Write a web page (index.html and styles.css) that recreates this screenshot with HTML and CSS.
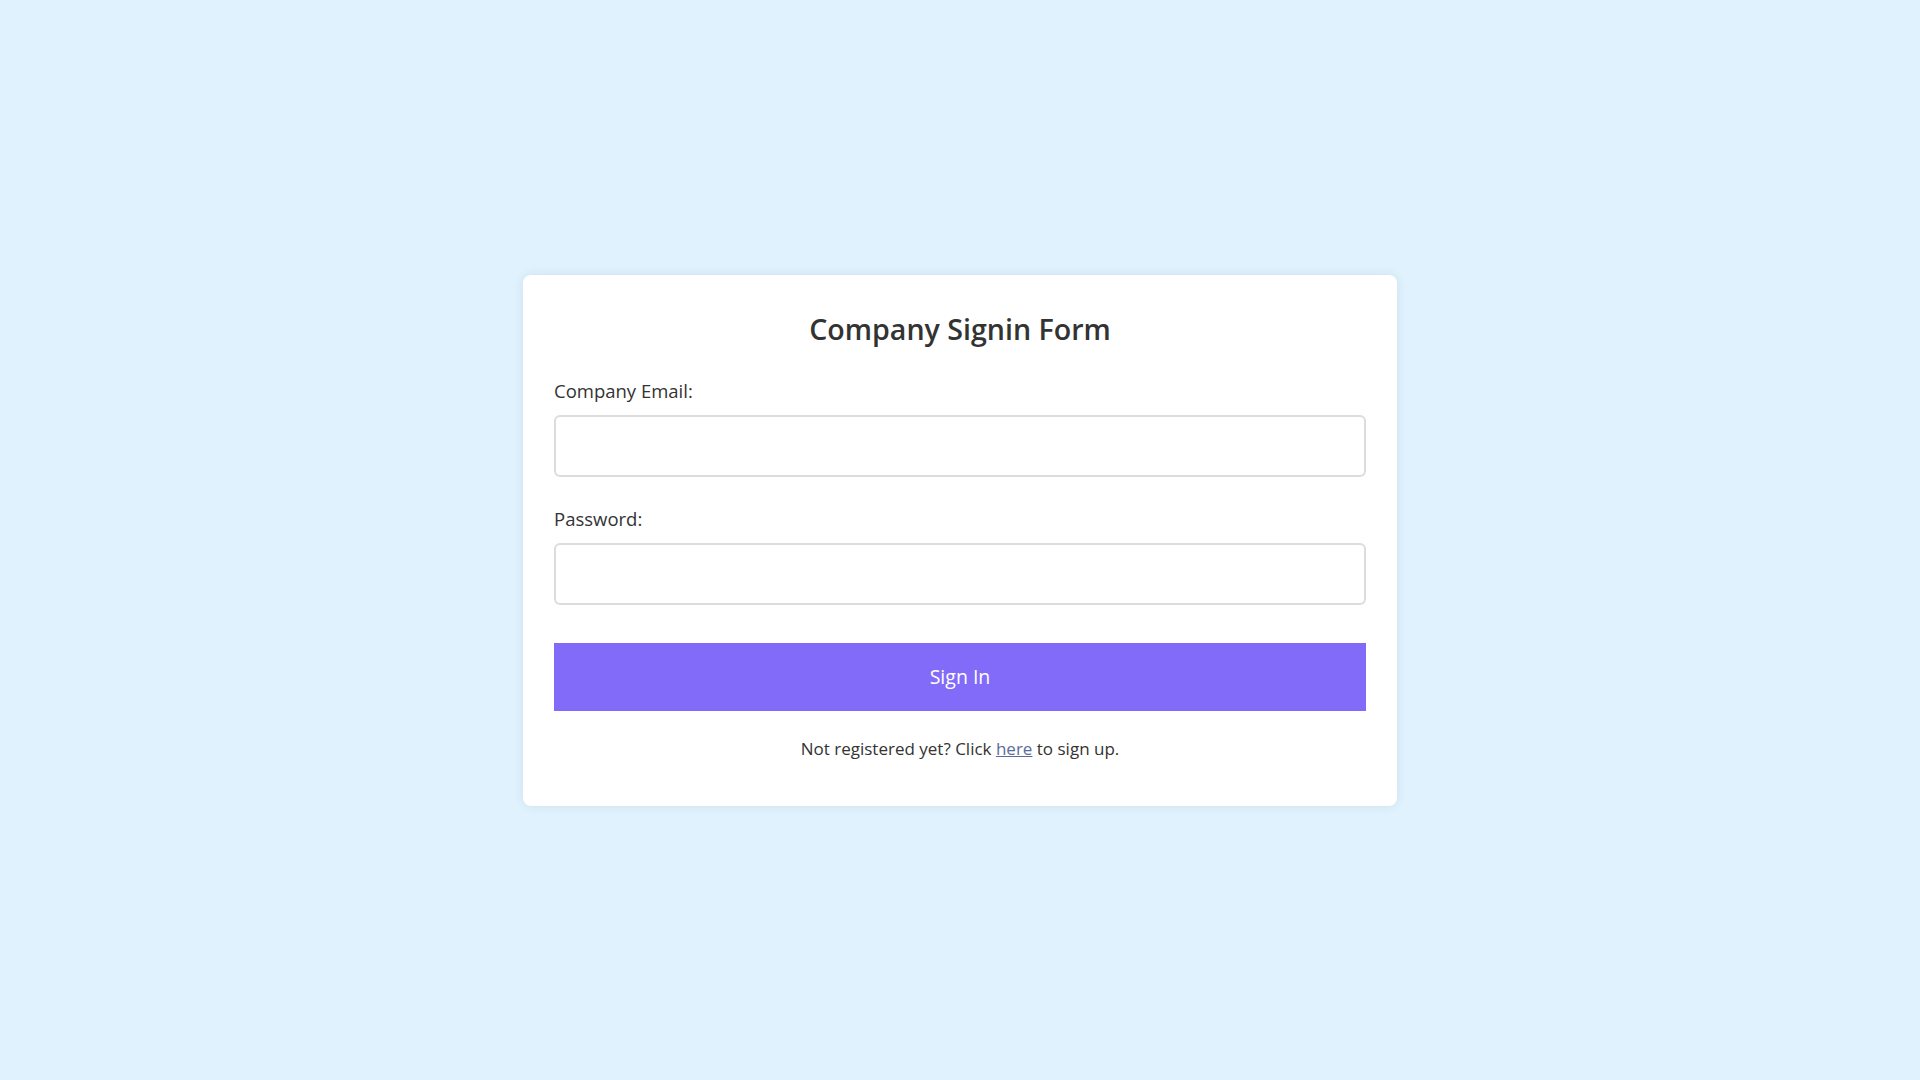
FILE: index.html
```html
<!DOCTYPE html>
<html lang="en">
<head>
<meta charset="utf-8">
<title>Company Signin</title>
<link rel="stylesheet" href="styles.css">
</head>
<body>
<main class="page">
  <div class="card">
    <h2 class="title">Company Signin Form</h2>
    <form class="form">
      <label class="label" for="email">Company Email:</label>
      <input class="input" id="email" type="email">
      <label class="label label-second" for="password">Password:</label>
      <input class="input" id="password" type="password">
      <button class="btn" type="button">Sign In</button>
    </form>
    <p class="footer">Not registered yet? Click <a class="link" href="#">here</a> to sign up.</p>
  </div>
</main>
</body>
</html>
```
FILE: styles.css
```css
* { box-sizing: border-box; }
html, body {
  margin: 0;
  padding: 0;
}
body {
  background: #e0f2fe;
  font-family: "Open Sans", "Noto Sans", sans-serif;
  color: #333;
}
.page {
  min-height: 100vh;
  display: flex;
  align-items: center;
  justify-content: center;
}
.card {
  width: 874px;
  background: #fff;
  border-radius: 8px;
  box-shadow: 0 0 12px rgba(0, 0, 0, 0.08);
  padding: 36px 31px 45px;
}
.title {
  margin: 0 0 33px;
  text-align: center;
  font-size: 28.6px;
  line-height: 35px;
  font-weight: 600;
  color: #333;
}
.form {
  display: flex;
  flex-direction: column;
}
.label {
  display: block;
  font-size: 18.5px;
  line-height: 24px;
  margin-bottom: 12px;
  color: #333;
}
.label-second {
  margin-top: 30px;
}
.input {
  display: block;
  width: 100%;
  height: 62px;
  border: 2px solid #dcdcdc;
  border-radius: 6px;
  background: #fff;
  font-size: 18px;
  padding: 0 12px;
  outline: none;
}
.btn {
  margin-top: 38px;
  height: 68px;
  width: 100%;
  border: none;
  background: #836bf9;
  color: #fff;
  font-family: "Open Sans", "Noto Sans", sans-serif;
  font-size: 19.5px;
  cursor: pointer;
}
.footer {
  margin: 26px 0 0;
  text-align: center;
  font-size: 17px;
  line-height: 24px;
  color: #333;
}
.link {
  color: #5b6b9b;
  text-decoration: underline;
}
```
